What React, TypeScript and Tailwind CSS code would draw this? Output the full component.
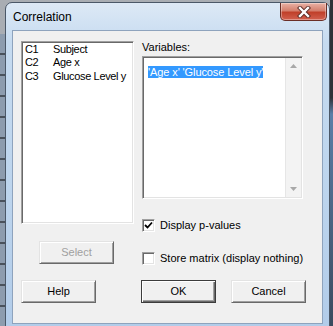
const FONT = { fontFamily: '"Liberation Sans", Arial, sans-serif' };

const columns = [
  { id: "C1", name: "Subject" },
  { id: "C2", name: "Age x" },
  { id: "C3", name: "Glucose Level y" },
];

function Button({ label, primary, disabled }: { label: string; primary?: boolean; disabled?: boolean }) {
  return (
    <div
      className={
        "flex h-[23px] w-[75px] items-center justify-center bg-[#f0f0f0] text-[11px] " +
        (primary
          ? "border border-[#3c3c3c] shadow-[inset_1px_1px_0_#ffffff,inset_-1px_-1px_0_#696969,inset_-2px_-2px_0_#a0a0a0] "
          : "border border-t-[#e3e3e3] border-l-[#e3e3e3] border-r-[#696969] border-b-[#696969] shadow-[inset_1px_1px_0_#ffffff,inset_-1px_-1px_0_#a0a0a0] ") +
        (disabled ? "text-[#a0a0a0]" : "text-black")
      }
    >
      {label}
    </div>
  );
}

function Checkbox({ label, checked }: { label: string; checked?: boolean }) {
  return (
    <div className="flex h-[13px] items-center gap-[5px]">
      <div className="flex h-[13px] w-[13px] items-center justify-center border border-t-[#a0a0a0] border-l-[#a0a0a0] border-r-[#ffffff] border-b-[#ffffff] bg-white shadow-[inset_1px_1px_0_#696969,inset_-1px_-1px_0_#e3e3e3]">
        {checked && (
          <svg width="9" height="9" viewBox="0 0 9 9">
            <path d="M1 4 L3.5 6.5 L8 1.5" fill="none" stroke="#000" strokeWidth="1.8" />
          </svg>
        )}
      </div>
      <span className="text-[11px] leading-[13px] text-black">{label}</span>
    </div>
  );
}

export default function App() {
  return (
    <div className="flex h-[326px] w-[333px] overflow-hidden bg-[#a9adb3]" style={FONT}>
      {/* background behind the dialog */}
      <div className="mt-[34px] w-[5px] shrink-0 bg-[repeating-linear-gradient(180deg,#8d9cae_0px,#8d9cae_19px,#4a525c_19px,#4a525c_21px)]" />

      {/* window */}
      <div className="mt-[2px] flex h-[330px] w-[325px] shrink-0 flex-col rounded-t-[7px] border border-[#4b5868] bg-[linear-gradient(180deg,#dde9f6_0%,#c6dbf0_12%,#bcd4ed_60%,#b2cce9_100%)]">
        {/* title bar */}
        <div className="flex h-[27px] items-start justify-between">
          <span className="pl-[7px] pt-[7px] text-[12px] leading-[15px] text-black">Correlation</span>
          <div className="mr-[2px] flex h-[18px] w-[47px] items-center justify-center rounded-b-[5px] border border-t-0 border-[#6a2e26] bg-[linear-gradient(180deg,#eab2a5_0%,#d47f6d_45%,#c0402a_55%,#d2614f_100%)] shadow-[inset_0_0_0_1px_rgba(255,255,255,0.35)]">
            <svg width="14" height="12" viewBox="0 0 14 12">
              <path d="M3 2 L11 10 M11 2 L3 10" stroke="#5a2b25" strokeWidth="4.2" strokeLinecap="square" />
              <path d="M3 2 L11 10 M11 2 L3 10" stroke="#ffffff" strokeWidth="2.4" strokeLinecap="square" />
            </svg>
          </div>
        </div>

        {/* client area */}
        <div className="mx-[6px] flex h-[294px] flex-col border border-[#8ea3bd] bg-[#f0f0f0] pl-[8px] pt-[10px]">
          <div className="flex items-start">
            {/* left column */}
            <div className="flex w-[113px] flex-col">
              <div className="h-[183px] border border-t-[#a0a0a0] border-l-[#a0a0a0] border-r-[#ffffff] border-b-[#ffffff] bg-white shadow-[inset_1px_1px_0_#696969,inset_-1px_-1px_0_#e3e3e3] pl-[3px] pt-[1px]">
                {columns.map((c) => (
                  <div key={c.id} className="flex text-[11px] leading-[13.3px] tracking-[-0.35px] text-black">
                    <span className="w-[28px]">{c.id}</span>
                    <span>{c.name}</span>
                  </div>
                ))}
              </div>
              <div className="ml-[18px] mt-[17px]">
                <Button label="Select" disabled />
              </div>
            </div>

            {/* right column */}
            <div className="ml-[8px] flex flex-col">
              <div className="h-[15px] text-[11px] leading-[13px] text-black">Variables:</div>
              <div className="flex h-[143px] w-[161px] border border-t-[#a0a0a0] border-l-[#a0a0a0] border-r-[#ffffff] border-b-[#ffffff] bg-white shadow-[inset_1px_1px_0_#696969,inset_-1px_-1px_0_#e3e3e3]">
                <div className="flex-1 pl-[5px] pt-[2px]">
                  <span className="bg-[#3399ff] text-[11px] leading-[13px] tracking-[-0.1px] text-white">'Age x' 'Glucose Level y'</span>
                </div>
                <div className="my-[1px] mr-[1px] flex w-[16px] flex-col items-center justify-between border-l border-[#e6e6e6] bg-[#f3f3f3] py-[6px]">
                  <svg width="7" height="4" viewBox="0 0 7 4">
                    <path d="M0 4 L3.5 0 L7 4 Z" fill="#a8a8a8" />
                  </svg>
                  <svg width="7" height="4" viewBox="0 0 7 4">
                    <path d="M0 0 L7 0 L3.5 4 Z" fill="#a8a8a8" />
                  </svg>
                </div>
              </div>
              <div className="mt-[20px]">
                <Checkbox label="Display p-values" checked />
              </div>
              <div className="mt-[20px]">
                <Checkbox label="Store matrix (display nothing)" />
              </div>
            </div>
          </div>

          {/* bottom buttons */}
          <div className="mt-[15px] flex">
            <Button label="Help" />
            <div className="ml-[45px]">
              <Button label="OK" primary />
            </div>
            <div className="ml-[15px]">
              <Button label="Cancel" />
            </div>
          </div>
        </div>
      </div>

      {/* background right of the dialog */}
      <div className="w-[3px] shrink-0 bg-[linear-gradient(180deg,#2e3238_0%,#2e3238_30%,#5b7fa8_35%,#3a4a5e_100%)]" />
    </div>
  );
}
